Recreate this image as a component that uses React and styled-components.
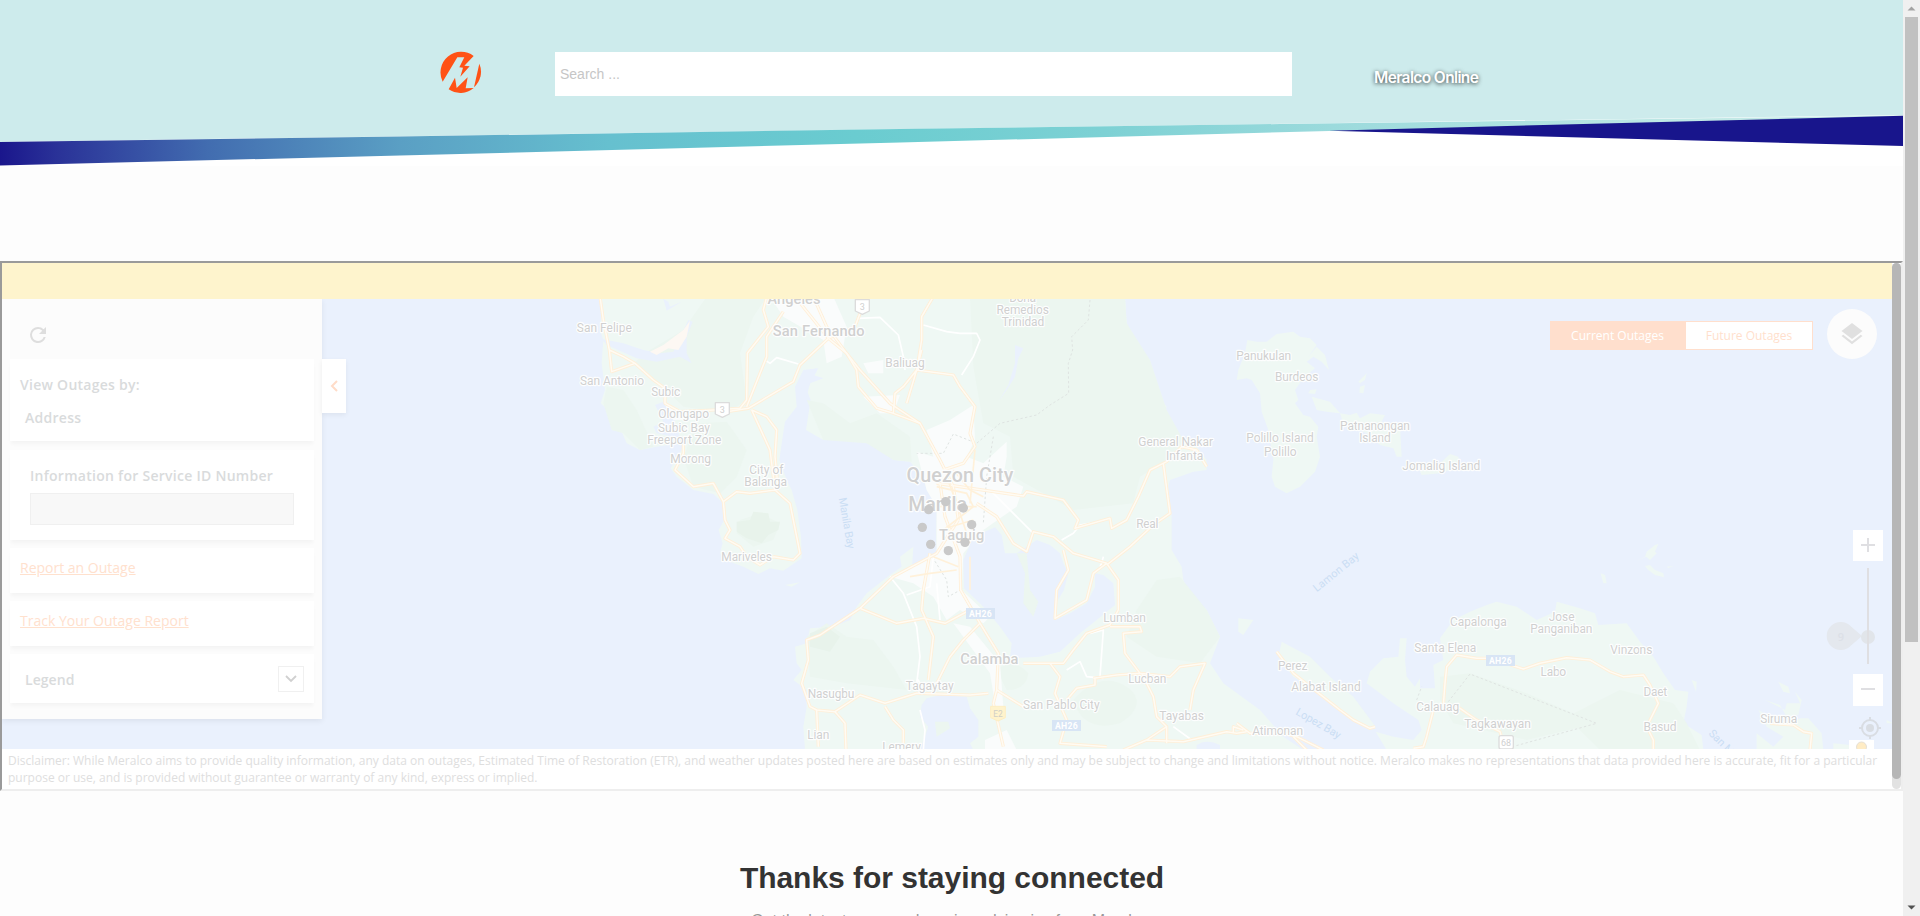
import React from "react";
import styled, { createGlobalStyle } from "styled-components";

const GlobalStyle = createGlobalStyle`
  * { box-sizing: border-box; }
  html, body { margin: 0; height: 916px; overflow: hidden; background: #fdfdfd; }
  body { font-family: "Liberation Sans", Arial, sans-serif; }
`;

const Window = styled.div`
  display: grid;
  grid-template-columns: 1903px 17px;
  height: 916px;
  overflow: hidden;
`;
const Page = styled.main`
  height: 916px;
  overflow: hidden;
  background: #fdfdfd;
`;

/* ---------- header ---------- */
const Header = styled.header`
  position: relative;
  height: 166px;
  display: flex;
  align-items: flex-start;
  padding: 51px 0 0 440px;
  background: #fff;
`;
const HeaderArt = styled.svg`
  position: absolute;
  inset: 0;
  width: 1903px;
  height: 166px;
`;
const Logo = styled.svg`
  position: relative;
  width: 42px;
  height: 42px;
  margin-right: 73px;
`;
const SearchInput = styled.input`
  position: relative;
  width: 737px;
  height: 44px;
  margin-top: 1px;
  padding: 0 5px;
  border: 0;
  outline: 0;
  background: #fff;
  font: 14px "Liberation Sans", Arial, sans-serif;
  &::placeholder { color: #c6c6c6; opacity: 1; }
`;
const BrandLink = styled.a`
  position: relative;
  margin: 17px 0 0 82px;
  color: #fff;
  font: 600 15.5px/20px Inter, "Open Sans", sans-serif;
  letter-spacing: -0.62px;
  white-space: nowrap;
  text-shadow: 0 1px 4px rgba(0, 0, 0, 0.8);
`;

/* ---------- embedded outage frame ---------- */
const Frame = styled.section`
  display: grid;
  grid-template-columns: 1890px 9px;
  width: 1903px;
  height: 530px;
  margin-top: 95px;
  border: 2px solid;
  border-color: #9a9a9a #eee #eee #9a9a9a;
  background: #fff;
  font-family: "Open Sans", sans-serif;
`;
const FrameBody = styled.div`
  display: flex;
  flex-direction: column;
`;
const Notice = styled.div`
  height: 36px;
  background: #fef4cd;
`;
const MapArea = styled.div`
  position: relative;
  height: 450px;
  overflow: hidden;
  background: #eaf1fd;
`;
const MapDrawing = styled.svg`
  display: block;
  width: 1890px;
  height: 450px;
  font-family: Roboto, sans-serif;
`;
const Disclaimer = styled.p`
  margin: 0;
  padding: 3px 6px 0;
  color: #dedede;
  font-size: 12px;
  line-height: 17px;
  white-space: nowrap;
`;
const FrameTrack = styled.div`
  border-radius: 5px;
  background: #e2e2e2;
`;
const FrameThumb = styled.div`
  height: 516px;
  border-radius: 5px;
  background: #b6b6b6;
`;

/* ---------- side panel ---------- */
const PanelLayer = styled.div`
  position: absolute;
  top: 0;
  left: 0;
  display: flex;
  align-items: flex-start;
`;
const Panel = styled.aside`
  display: flex;
  flex-direction: column;
  width: 320px;
  height: 420px;
  padding: 0 8px;
  background: #fcfcfc;
  box-shadow: 0 2px 6px rgba(0, 0, 0, 0.07);
`;
const PanelTools = styled.div`
  display: flex;
  align-items: center;
  height: 60px;
  padding: 12px 0 0 16px;
`;
const Card = styled.div`
  flex: none;
  height: ${(p) => p.$h}px;
  margin-bottom: ${(p) => p.$gap ?? 8}px;
  padding: ${(p) => p.$pad || "0 10px"};
  background: #fff;
  box-shadow: 0 4px 4px -1px rgba(0, 0, 0, 0.035);
`;
const LegendRow = styled(Card)`
  display: flex;
  align-items: center;
  justify-content: space-between;
`;
const Heading = styled.div`
  color: #d9dbdc;
  font-size: 14px;
  font-weight: 600;
  line-height: 20px;
  letter-spacing: ${(p) => (p.$tight ? 0.05 : 0.27)}px;
  padding-left: ${(p) => p.$indent || 0}px;
  margin-top: ${(p) => p.$top || 0}px;
  white-space: nowrap;
`;
const ServiceInput = styled.input`
  display: block;
  width: 264px;
  height: 32px;
  margin-top: 7px;
  border: 1px solid #f0f0f0;
  background: #f8f8f8;
`;
const PanelLink = styled.a`
  color: #ffe1ce;
  font-size: 14px;
  line-height: 20px;
  text-decoration: underline;
  white-space: nowrap;
`;
const SquareButton = styled.span`
  display: flex;
  align-items: center;
  justify-content: center;
  width: 26px;
  height: 26px;
  border: 1px solid #f0f0f0;
`;
const CollapseTab = styled.div`
  display: flex;
  align-items: center;
  justify-content: center;
  width: 24px;
  height: 54px;
  margin-top: 60px;
  background: #fff;
  box-shadow: 0 2px 5px rgba(0, 0, 0, 0.06);
`;

/* ---------- map controls ---------- */
const TopControls = styled.div`
  position: absolute;
  top: 10px;
  right: 15px;
  display: flex;
  gap: 14px;
`;
const Toggle = styled.div`
  display: flex;
  width: 263px;
  height: 29px;
  margin-top: 12px;
  border: 1px solid #ffdfcd;
  background: #fff;
`;
const ToggleItem = styled.span`
  width: ${(p) => (p.$active ? 135 : 126)}px;
  padding-right: ${(p) => (p.$active ? 2 : 0)}px;
  background: ${(p) => (p.$active ? "#ffdfcd" : "#fff")};
  color: ${(p) => (p.$active ? "#fff" : "#ffdfcd")};
  font-size: 12px;
  line-height: 27px;
  text-align: center;
`;
const LayersButton = styled.div`
  display: flex;
  align-items: center;
  justify-content: center;
  width: 50px;
  height: 50px;
  border-radius: 50%;
  background: #fcfcfc;
`;
const ZoomControls = styled.svg`
  position: absolute;
  top: 231px;
  right: 0;
  width: 72px;
  height: 219px;
`;

/* ---------- footer text ---------- */
const Thanks = styled.section`
  padding-top: 69px;
  text-align: center;
`;
const ThanksTitle = styled.h2`
  margin: 0;
  padding-left: 1px;
  color: #333;
  font-size: 30px;
  font-weight: 700;
  line-height: 36px;
  letter-spacing: -0.03px;
`;
const ThanksText = styled.p`
  margin: 15px 0 0;
  color: #999;
  font-size: 16px;
  line-height: 20px;
  padding-right: 3px;
`;

/* ---------- window scrollbar ---------- */
const Scrollbar = styled.div`
  display: flex;
  flex-direction: column;
  align-items: center;
  justify-content: space-between;
  height: 916px;
  background: #f0f0f0;
`;
const Thumb = styled.div`
  width: 13px;
  height: 625px;
  margin-bottom: auto;
  background: #c1c1c1;
`;
const ArrowBox = styled.svg`
  width: 17px;
  height: 17px;
`;

/* Map geometry; three units per screen pixel. */
const LUZON =
  "M175 20L185 60 180 120 190 150 185 220 195 300 182 340 210 365 208 395 230 395 215 420 245 425 260 460 300 480 350 470 405 462 400 440 350 430 340 410 370 395 345 345 370 335 400 350 405 400 430 470 412 500 392 535 410 560 460 600 520 612 550 640 558 680 536 720 548 760 540 790 570 815 610 830 655 852 690 835 730 842 785 805 783 740 772 660 755 600 740 570 718 510 728 440 735 395 770 350 765 290 790 240 835 235 800 300 812 330 798 420 850 450 920 440 980 460 1030 460 1060 510 1110 515 1150 560 1160 600 1190 650 1188 740 1190 785 1140 820 1115 845 1120 770 1080 800 1085 830 1050 855 980 910 950 950 930 990 880 1010 810 1015 800 1060 765 1070 770 1120 785 1140 760 1170 800 1200 800 1250 790 1310 795 1380H2290L2230 1340 2160 1260 2050 1180 2010 1120 2040 1040 2000 960 1940 900 1930 870 1925 830 1895 780 1895 680 1885 590 1890 570 1960 545 2000 540 2000 510 1970 470 1930 450 1890 410 1870 370 1880 350 1840 300 1830 210 1790 160 1760 100 1755 20Z";

const LAKES = [
  "M1270 810L1300 740 1365 712 1385 735 1395 790 1430 790 1460 770 1490 750 1530 765 1560 790 1570 820 1585 850 1572 900 1545 945 1545 990 1590 970 1640 940 1665 890 1665 850 1690 855 1720 880 1725 945 1670 990 1620 1030 1560 1085 1500 1100 1410 1105 1415 1060 1380 1010 1330 950 1272 895Z",
  "M1145 1245L1160 1225 1200 1215 1280 1220 1290 1255 1315 1290 1315 1340 1290 1360 1300 1380H1140L1165 1310 1140 1280Z",
  "M1970 1365Q2000 1345 2040 1365V1380H1970Z",
  "M185 147L250 160 310 180 360 190 400 185 445 90 458 95 440 140 440 190 455 220 420 200 350 215 290 205 200 165Z",
  "M1425 165L1450 175 1435 205 1425 260 1400 300 1375 335 1405 285 1425 220Z",
  "M370 27L385 35 390 50 425 35 380 62Z",
  "M790 245L830 235 820 255 850 265 810 280 800 320 785 300Z",
];

const ISLANDS = [
  "M2122 150L2150 155 2180 155 2210 132 2260 125 2280 140 2310 145 2330 165 2305 200 2330 170 2355 195 2367 240 2345 215 2320 200 2300 215 2325 235 2290 265 2265 300 2275 330 2265 340 2290 375 2310 380 2335 410 2330 440 2340 500 2325 545 2280 590 2240 610 2205 590 2195 560 2200 510 2185 420 2165 365 2160 310 2135 270 2120 265 2090 270 2095 240 2115 190Z",
  "M2315 320L2370 335 2400 370 2360 365 2330 360Z",
  "M2400 370L2430 375 2450 368 2460 385 2490 370 2535 375 2525 395 2580 410 2585 500 2570 500 2560 475 2520 465 2480 430 2410 400Z",
  "M2640 545L2700 520 2730 492 2755 500 2760 530 2700 550 2645 555Z",
  "M2455 275L2480 250 2475 270 2460 280ZM2460 290L2475 285 2470 310 2458 308ZM2310 300L2330 298 2325 312 2305 310Z",
  "M3285 815L3315 800 3320 785 3345 765 3355 762 3345 785 3350 790 3330 810 3318 800ZM3315 828L3330 825 3345 840 3370 850 3372 862 3345 855 3325 840ZM3380 830L3400 828 3385 834ZM3182 850L3195 855 3200 880 3190 880ZM735 885L780 877 755 890ZM2095 985L2140 990 2110 1035 2095 1025Z",
  "M2225 1055L2310 1100 2370 1160 2440 1220 2507 1310 2490 1320 2430 1285 2350 1220 2260 1160 2215 1100Z",
  "M2507 1325L2560 1340 2620 1350 2645 1320 2635 1290 2560 1240 2480 1180 2490 1145 2530 1105 2575 1100 2580 1045 2600 1045 2595 1110 2600 1160 2625 1190 2640 1165 2640 1195 2685 1195 2680 1125 2710 1110 2700 1045 2740 990 2790 965 2840 945 2870 935 2930 950 2990 990 3045 965 3050 935 3120 955 3165 970 3175 1005 3260 1000 3300 1055 3340 1100 3370 1150 3405 1200 3445 1205 3440 1250 3430 1300 3485 1335 3490 1380H2540Z",
  "M3655 1260L3680 1310 3730 1340 3700 1370 3650 1330 3650 1380H3850L3845 1330 3805 1285 3780 1285 3750 1300 3700 1285ZM3675 1230L3720 1245 3740 1280 3775 1275 3785 1230 3765 1205 3780 1240 3740 1240 3735 1260ZM3715 1175L3745 1190 3750 1210 3730 1205ZM4040 1290L4060 1300H4040ZM3455 1170L3470 1175 3468 1205ZM3880 1360L3930 1365V1380H3880Z",
  "M1430 790L1455 850 1450 940 1480 980 1495 935 1470 900 1460 790Z",
  "M1185 1295L1225 1295 1230 1315 1190 1340Z",
];

const HILLS = [
  "M500 20H680L640 80 600 190 620 330 560 370 430 350 380 300 280 220 330 180 430 120Z",
  "M200 290L250 300 290 360 340 470 300 480 250 430 215 420 190 340Z",
  "M1290 20H1755L1760 100 1830 210 1880 360 1930 450 1900 500 1800 560 1780 640 1600 660 1420 560 1410 440 1330 400 1300 230Z",
  "M470 400L560 395 620 480 590 560 540 610 460 590 430 500Z",
  "M800 330L850 340 930 400 1010 370 1110 440 1115 515 1060 510 980 460 850 450Z",
  "M600 690L660 670 720 700 700 750 640 770 590 730Z",
  "M800 1040L860 1000 920 1040 1000 1050 1060 1130 1100 1200 920 1180 810 1160Z",
  "M1600 1230Q1680 1140 1760 1190 1830 1240 1740 1300 1630 1330 1600 1230Z",
  "M1850 870L1920 860 2000 960 2040 1040 1980 1120 1850 1100 1760 1040 1790 960Z",
  "M1370 1140Q1420 1100 1465 1150 1460 1200 1400 1200Z",
  "M2700 1160L2790 1150 2960 1210 3170 1300 2960 1350 2740 1300 2700 1230Z",
  "M3240 1200L3400 1240 3440 1300 3480 1380H3180L3080 1280Z",
];

const URBAN = [
  "M1130 485L1180 500 1160 420 1230 390 1300 345 1305 450 1280 500 1330 520 1400 455 1400 500 1390 560 1450 590 1430 650 1330 720 1270 790 1265 900 1350 980 1330 1000 1260 960 1220 990 1180 920 1120 880 1050 860 1190 790 1190 650 1160 600Z",
  "M690 20H880L920 110 905 200 860 220 850 150 730 80Z",
  "M970 220L1030 210 1030 250 985 250ZM970 320L1080 315 1060 370 1020 370ZM370 335L440 370 470 390 400 390Z",
  "M1240 1000L1290 1010 1380 1120 1390 1250 1370 1270 1350 1150ZM1335 1350L1400 1320 1430 1380H1335Z",
];

const LOCAL_ROADS = [
  "M675 210L690 220 710 203 775 222M955 85L1020 82 1075 135 1090 200 1095 240M1150 105L1220 125 1260 130 1310 130 1320 150 1300 200 1265 255M1050 860L1090 910 1130 1010 1140 1100 1130 1180 1135 1170 1140 1180M1180 800L1170 890 1100 915M1190 880L1200 990M1350 600L1400 650 1440 690 1480 730M1565 750L1600 730 1620 705 1650 700M1690 800L1685 820 1680 830M1650 1030L1690 1020 1680 1160M1580 1140L1620 1115 1640 1160 1690 1165M1900 1310L1955 1350M1140 1260L1155 1320 1150 1380",
];

const MAJOR_ROADS = [
  "M180 20L190 90 208 180 215 245 285 220 250 200 208 180M285 220L340 270 375 295 375 340 420 365 520 360 600 355 620 330 622 190 685 110 670 60 680 20",
  "M820 20L860 110 920 190 960 240 1050 340 1140 400 1200 510 1240 590 1255 690",
  "M765 20L865 145 780 225 760 275 625 355 560 365M865 145L920 190 950 240 955 290 1010 355 1060 370 1140 400",
  "M730 65L680 140 680 200 640 300 620 350M635 360L690 480 705 600 750 640 770 740 780 790 760 810 700 800M635 360L680 380 710 420 705 500 715 600M705 600L630 610 590 605 550 635 555 690 570 720 555 745 600 770 620 800 660 825 700 800M550 635L520 580 460 590 405 540 430 490 430 440",
  "M1180 20L1145 80 1145 150 1130 240 1090 290 1065 310 1060 370M1145 180L1130 240 1100 340M1130 240L1240 255 1260 290 1305 350 1290 430 1305 470 1270 520 1210 540",
  "M960 70L945 110 865 145",
  "M1190 580L1450 618 1460 605 1570 630 1615 690 1605 715 1710 685 1715 715 1760 690 1795 620 1830 540 1880 515 1925 470 1970 480 2000 530M1870 520L1890 670 1840 705 1770 770 1700 825",
  "M1255 690L1190 790 1060 860 960 955 900 995 840 1035 800 1050 805 1110 785 1180 810 1250 830 1260 885 1265 960 1215 1035 1240 1130 1210 1290 1215 1345 1210",
  "M1200 580L1215 680 1260 800 1262 900 1320 1000 1375 1090 1370 1200 1360 1240 1390 1370",
  "M1170 790L1150 900 1145 960 1180 1040 1165 1170M960 955L1070 1000 1150 985 1215 1000 1290 960M1320 1000L1270 1050 1230 1100 1190 1180M830 1260L835 1370M885 1265L915 1300 918 1380M1035 1250L1060 1290 1090 1320 1090 1360",
  "M1310 640L1370 680 1420 760 1460 785 1480 725 1540 740 1600 790 1700 820 1735 870 1735 960M1570 780L1585 840 1550 900 1545 985 1640 930 1660 850 1700 820M1735 960L1710 1005 1640 1030 1600 1080 1570 1120 1450 1120M1710 1010L1800 1010 1805 1025 1750 1030 1755 1090 1800 1150 1730 1155 1660 1165M1800 1150L1890 1160 1920 1130 1995 1120 1960 1200 1950 1260M1530 1120L1560 1160 1545 1210 1580 1290 1560 1360 1700 1370M1580 1230L1610 1195 1665 1185 1665 1165M1805 1150L1840 1220 1850 1280 1880 1310 1820 1350 1750 1380M1880 1310L1880 1360M1820 1350L1930 1355 2060 1325 2090 1330 2120 1325M2080 1330L2080 1310 2110 1320M1370 1200L1450 1250",
  "M2210 1085L2260 1150 2330 1205 2400 1260 2440 1290 2490 1315 2505 1310M2090 1300L2130 1330 2230 1330 2270 1340 2330 1370 2350 1380M2260 1340L2300 1380",
  "M2710 1245L2715 1180 2720 1130 2750 1095 2810 1105 2850 1105 2950 1137 3000 1120 3080 1103 3150 1110 3210 1145 3250 1160 3310 1155 3330 1185 3355 1240 3320 1310 3340 1350 3340 1380M2710 1245L2760 1255 2810 1290 2880 1325 2895 1380M2680 1260L2660 1340 2650 1370 2620 1375M3690 1300L3760 1305 3790 1325 3815 1330 3810 1380",
];

const CITY_STREETS =
  "M1190 590L1280 610 1300 650 1210 720M1220 560L1250 640 1290 760M1240 540L1290 600 1330 620M1180 650L1310 650M1200 720L1300 690M1290 800V900M1180 800L1255 830M1110 860L1170 850 1250 840M1305 480L1290 640";

/* name, centre x, baseline y, width */
const PLACES = [
  ["San Felipe", 193, 126, 165], ["San Antonio", 216, 286, 192], ["Subic", 377, 318, 87],
  ["Olongapo", 431, 384, 152], ["Subic Bay", 432, 426, 156], ["Freeport Zone", 433, 462, 222],
  ["Morong", 452, 520, 122], ["City of", 679, 552, 102], ["Balanga", 677, 588, 128],
  ["Mariveles", 620, 813, 152], ["Baliuag", 1095, 231, 118],
  ["Doña", 1448, 36, 80], ["Remedios", 1448, 72, 157], ["Trinidad", 1449, 108, 128],
  ["General Nakar", 1907, 468, 224], ["Infanta", 1934, 510, 112], ["Real", 1822, 714, 67],
  ["Panukulan", 2171, 210, 165], ["Burdeos", 2270, 273, 130], ["Polillo Island", 2220, 456, 203],
  ["Polillo", 2221, 498, 98], ["Patnanongan", 2505, 420, 210], ["Island", 2505, 456, 95],
  ["Jomalig Island", 2704, 540, 234],
  ["Lumban", 1754, 997, 128], ["Lucban", 1822, 1180, 115], ["Tagaytay", 1169, 1201, 144],
  ["Nasugbu", 873, 1225, 140], ["Lian", 835, 1348, 66], ["Lemery", 1085, 1384, 116],
  ["San Pablo City", 1564, 1258, 230], ["Tayabas", 1925, 1291, 134],
  ["Perez", 2258, 1140, 88], ["Alabat Island", 2358, 1203, 208], ["Atimonan", 2213, 1335, 153],
  ["Capalonga", 2815, 1008, 170], ["Jose", 3065, 993, 77], ["Panganiban", 3064, 1029, 187],
  ["Santa Elena", 2716, 1086, 186], ["Vinzons", 3274, 1092, 126], ["Labo", 3040, 1159, 77],
  ["Daet", 3346, 1218, 71], ["Calauag", 2693, 1263, 129], ["Tagkawayan", 2873, 1314, 200],
  ["Basud", 3360, 1323, 99], ["Siruma", 3716, 1300, 111],
];
const CITIES = [
  ["Angeles", 762, 42, 159, 44], ["San Fernando", 836, 139, 275, 44], ["Quezon City", 1260, 575, 321, 59],
  ["Manila", 1193, 662, 177, 59], ["Taguig", 1265, 751, 136, 44], ["Calamba", 1348, 1123, 175, 44],
];
const HIGHWAYS = [[1278, 954], [1536, 1290], [2838, 1095]];
const DOTS = [[1217, 635], [1270, 654], [1295, 704], [1275, 757], [1225, 782], [1172, 763], [1147, 712], [1166, 659]];

function OutageMap() {
  return (
    <MapDrawing viewBox="-1614 27 5670 1350">
      <g fill="#eff8f4">
        <path d={LUZON} />
        {ISLANDS.slice(0, 9).map((d) => <path key={d} d={d} />)}
      </g>
      <g fill="#ecf6f0">{HILLS.map((d) => <path key={d} d={d} />)}</g>
      <path fill="#e8f3eb" d="M590 695L630 690 640 665 685 670 690 695 720 695 715 720 685 735 665 760 620 745 590 725ZM810 1030L860 1010 900 1040 870 1085 810 1070Z" />
      <g fill="#fafcfc">{URBAN.map((d) => <path key={d} d={d} />)}</g>
      <g fill="#eaf1fd">{LAKES.map((d) => <path key={d} d={d} />)}</g>
      <path fill="#fdf8f3" d="M330 185L370 165 430 120 450 92 440 140 415 180 385 175 350 195Z" />
      <g fill="#ecf6f0">{ISLANDS.slice(9).map((d) => <path key={d} d={d} />)}</g>
      <path
        fill="none" stroke="#dfe4e2" strokeWidth="3" strokeDasharray="7 7"
        d="M1650 30L1645 90 1595 140 1598 180 1585 220 1586 310 1530 345 1490 375 1380 400 1310 460 1240 432 1210 490 1130 490M1360 440L1340 560 1330 700M1170 790L1220 870 1225 920 1270 895M2725 1235L2790 1152 3170 1300 2925 1368M2630 1230L2645 1190"
      />
      <g fill="none" stroke="#fff" strokeWidth="5" strokeLinejoin="round">
        {LOCAL_ROADS.map((d) => <path key={d} d={d} />)}
      </g>
      <g fill="none" stroke="#ffefd8" strokeWidth="9.5" strokeLinejoin="round">
        {MAJOR_ROADS.map((d) => <path key={d} d={d} />)}
      </g>
      <g fill="none" stroke="#fffbf3" strokeWidth="4.5" strokeLinejoin="round">
        {MAJOR_ROADS.map((d) => <path key={d} d={d} />)}
      </g>
      <path d={CITY_STREETS} fill="none" stroke="#fff1da" strokeWidth="5" />

      {[[967, 50], [547, 359]].map(([x, y]) => (
        <g key={x} textAnchor="middle">
          <path d={`M${x - 21} ${y - 21}h42v34l-21 10-21-10z`} fill="#fff" stroke="#dcdcdc" strokeWidth="4" strokeLinejoin="round" />
          <text x={x} y={y + 10} fontSize="27" fill="#d0d0d0">3</text>
        </g>
      ))}
      <rect x="2877" y="1337" width="43" height="40" rx="6" fill="#fff" stroke="#dcdcdc" strokeWidth="4" />
      <text x="2898" y="1367" fontSize="27" textAnchor="middle" fill="#d0d0d0">68</text>
      <path d="M1352 1249h44v34l-22 10-22-10z" fill="#fff3cc" stroke="#fdeec4" strokeWidth="3" strokeLinejoin="round" />
      <text x="1374" y="1281" fontSize="25" textAnchor="middle" fill="#d0cfc6">E2</text>
      {HIGHWAYS.map(([x, y]) => (
        <g key={x}>
          <rect x={x} y={y} width="87" height="33" fill="#d8e5f5" />
          <text x={x + 43} y={y + 26} fontSize="26" fontWeight="700" fill="#fff" textAnchor="middle" textLength="68">AH26</text>
        </g>
      ))}

      <g fill="#cbdef4" fontSize="33">
        <text transform="translate(896 625) rotate(80)" textLength="155">Manila Bay</text>
        <text transform="translate(2330 907) rotate(-39)" textLength="167">Lamon Bay</text>
        <text transform="translate(2265 1272) rotate(30)" textLength="150">Lopez Bay</text>
        <text transform="translate(3504 1332) rotate(45)">San Miguel</text>
      </g>
      <g fill="#d0d0d0" fontSize="36" textAnchor="middle" stroke="#fdfefe" strokeWidth="7" strokeLinejoin="round" paintOrder="stroke">
        {PLACES.map(([name, x, y, w]) => (
          <text key={name + x} x={x} y={y} textLength={w}>{name}</text>
        ))}
        {CITIES.map(([name, x, y, w, s]) => (
          <text key={name} x={x} y={y} textLength={w} fontSize={s} fontWeight="500">{name}</text>
        ))}
      </g>
      <g fill="#c9c9c9">{DOTS.map(([x, y]) => <circle key={x} cx={x} cy={y} r="14" />)}</g>
    </MapDrawing>
  );
}

function HeaderBackground() {
  return (
    <HeaderArt viewBox="0 0 1903 166">
      <defs>
        <linearGradient id="band" gradientUnits="userSpaceOnUse" x1="0" y1="0" x2="1903" y2="0">
          <stop offset="0" stopColor="#1a168c" />
          <stop offset="0.03" stopColor="#2a3298" />
          <stop offset="0.11" stopColor="#426db0" />
          <stop offset="0.21" stopColor="#5a9fc4" />
          <stop offset="0.32" stopColor="#66c0cf" />
          <stop offset="0.45" stopColor="#6accd0" />
          <stop offset="0.58" stopColor="#7dd1d4" />
          <stop offset="0.7" stopColor="#9bdadc" />
          <stop offset="0.9" stopColor="#c3e9e6" />
        </linearGradient>
      </defs>
      <path d="M0 0H1903V115L0 142Z" fill="#cdebec" />
      <path d="M0 142L400 136.5 900 129 1280 124 1903 115.5V118L1329 131 900 142.5 400 155.5 0 165.5Z" fill="url(#band)" />
      <path d="M1329 130.7L1903 115.7V146Z" fill="#18158c" />
    </HeaderArt>
  );
}

export default function App() {
  return (
    <Window>
      <GlobalStyle />
      <Page>
        <Header>
          <HeaderBackground />
          <Logo viewBox="120 63 126 126" fill="#ff5216">
            <path d="M128 155A62 62 0 0 1 221 78L193 107 209 109 181 140 189 113 178 112 193 82H172Z" />
            <path d="M146 178L165 143 170 174 203 142 197 175 221 174A62 62 0 0 1 146 178Z" />
            <path d="M238 101A62 62 0 0 1 222 172Z" />
          </Logo>
          <SearchInput placeholder="Search ..." />
          <BrandLink>Meralco Online</BrandLink>
        </Header>

        <Frame>
          <FrameBody>
            <Notice />
            <MapArea>
              <OutageMap />
              <PanelLayer>
                <Panel>
                  <PanelTools>
                    <svg width="24" height="24" viewBox="0 0 24 24" fill="#dedede">
                      <path d="M17.65 6.35A7.96 7.96 0 0 0 12 4a8 8 0 1 0 7.73 10h-2.08A6 6 0 1 1 12 6c1.66 0 3.14.69 4.22 1.78L13 11h7V4z" />
                    </svg>
                  </PanelTools>
                  <Card $h={82} $gap={9} $pad="16px 10px 0">
                    <Heading>View Outages by:</Heading>
                    <Heading $top={13} $indent={5}>Address</Heading>
                  </Card>
                  <Card $h={90} $pad="16px 20px 0">
                    <Heading>Information for Service ID Number</Heading>
                    <ServiceInput />
                  </Card>
                  <Card $h={45} $pad="8px 10px"><PanelLink>Report an Outage</PanelLink></Card>
                  <Card $h={45} $pad="8px 10px"><PanelLink>Track Your Outage Report</PanelLink></Card>
                  <LegendRow $h={49} $pad="0 10px 0 15px">
                    <Heading $top={3} $tight>Legend</Heading>
                    <SquareButton>
                      <svg width="12" height="8" viewBox="0 0 12 8" fill="none" stroke="#d0d0d0" strokeWidth="1.8"><path d="M1 1l5 5 5-5" /></svg>
                    </SquareButton>
                  </LegendRow>
                </Panel>
                <CollapseTab>
                  <svg width="8" height="12" viewBox="0 0 8 12" fill="none" stroke="#ffdcc8" strokeWidth="2"><path d="M7 1L2 6l5 5" /></svg>
                </CollapseTab>
              </PanelLayer>
              <TopControls>
                <Toggle>
                  <ToggleItem $active>Current Outages</ToggleItem>
                  <ToggleItem>Future Outages</ToggleItem>
                </Toggle>
                <LayersButton>
                  <svg width="22" height="22" viewBox="0 0 22 22" fill="#e0e0e0">
                    <path d="M11 0l10.5 8L11 16 .5 8z" />
                    <path d="M.5 13l1.8-1.3L11 18.400l8.700-6.700L21.500 13 11 21.200z" />
                  </svg>
                </LayersButton>
              </TopControls>
              <ZoomControls viewBox="1820 530 72 219">
                <path d="M1853 530h30v31h-30zM1853 674h30v32h-30zM1849 740h25v9h-25z" fill="#fff" />
                <path d="M1862 636l-11 9.500a14 14 0 1 1 0-19z" fill="#e4e8ee" />
                <circle cx="1868" cy="637" r="7" fill="#e1e5ea" />
                <path d="M1861 545h14M1868 538v14M1861 689h14M1868 568v96" stroke="#dfdfe2" strokeWidth="2" />
                <text x="1841" y="641" fill="#dce0e7" fontSize="11" fontWeight="600" textAnchor="middle">9</text>
                <g fill="none" stroke="#d9dde3" strokeWidth="2">
                  <circle cx="1870" cy="728" r="8" />
                  <path d="M1870 717v4M1870 735v4M1859 728h4M1877 728h4" />
                </g>
                <circle cx="1870" cy="728" r="4" fill="#d9dde3" />
                <circle cx="1861.500" cy="747" r="5" fill="#ffecc5" stroke="#e6e0d6" />
              </ZoomControls>
            </MapArea>
            <Disclaimer>
              Disclaimer: While Meralco aims to provide quality information, any data on outages, Estimated Time of Restoration (ETR), and weather updates posted here are based on estimates only and may be subject to change and limitations without notice. Meralco makes no representations that data provided here is accurate, fit for a particular
              <br />
              purpose or use, and is provided without guarantee or warranty of any kind, express or implied.
            </Disclaimer>
          </FrameBody>
          <FrameTrack><FrameThumb /></FrameTrack>
        </Frame>

        <Thanks>
          <ThanksTitle>Thanks for staying connected</ThanksTitle>
          <ThanksText>Get the latest news and service advisories from Meralco</ThanksText>
        </Thanks>
      </Page>
      <Scrollbar>
        <ArrowBox viewBox="0 0 17 17"><path d="M4.500 10.500h8l-4-4z" fill="#a3a3a3" /></ArrowBox>
        <Thumb />
        <ArrowBox viewBox="0 0 17 17"><path d="M4.500 6.500h8l-4 4z" fill="#505050" /></ArrowBox>
      </Scrollbar>
    </Window>
  );
}
